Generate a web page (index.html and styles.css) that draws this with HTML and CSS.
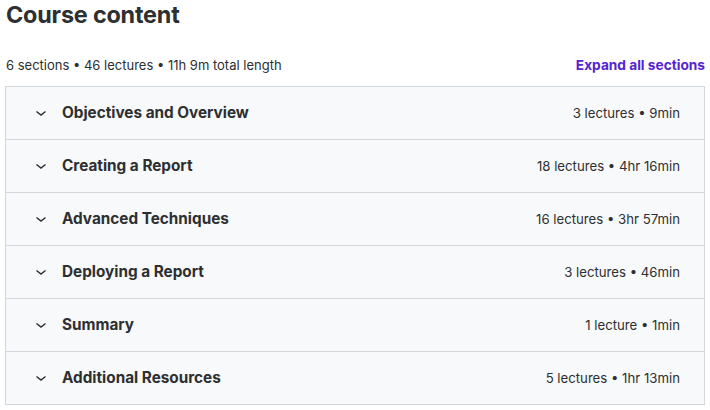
FILE: index.html
```html
<!DOCTYPE html>
<html lang="en">
<head>
    <meta charset="UTF-8">
    <meta name="viewport" content="width=device-width, initial-scale=1.0">
    <title>Course content</title>
    <link rel="stylesheet" href="styles.css">
</head>
<body>
    <div class="curriculum">
        <h2 class="curriculum-title">Course content</h2>

        <!-- SUMMARY BAR -->
        <div class="curriculum-summary">
            <span class="summary-text">6 sections • 46 lectures • 11h 9m total length</span>
            <a href="#" class="expand-btn">Expand all sections</a>
        </div>

        <!-- SECTIONS -->
        <div class="section-list">
            <div class="section-row">
                <svg class="chevron" viewBox="0 0 12 8"><path d="M1.5 2.5L6 6l4.5-3.5"/></svg>
                <span class="section-title">Objectives and Overview</span>
                <span class="section-meta">3 lectures • 9min</span>
            </div>
            <div class="section-row">
                <svg class="chevron" viewBox="0 0 12 8"><path d="M1.5 2.5L6 6l4.5-3.5"/></svg>
                <span class="section-title">Creating a Report</span>
                <span class="section-meta">18 lectures • 4hr 16min</span>
            </div>
            <div class="section-row">
                <svg class="chevron" viewBox="0 0 12 8"><path d="M1.5 2.5L6 6l4.5-3.5"/></svg>
                <span class="section-title">Advanced Techniques</span>
                <span class="section-meta">16 lectures • 3hr 57min</span>
            </div>
            <div class="section-row">
                <svg class="chevron" viewBox="0 0 12 8"><path d="M1.5 2.5L6 6l4.5-3.5"/></svg>
                <span class="section-title">Deploying a Report</span>
                <span class="section-meta">3 lectures • 46min</span>
            </div>
            <div class="section-row">
                <svg class="chevron" viewBox="0 0 12 8"><path d="M1.5 2.5L6 6l4.5-3.5"/></svg>
                <span class="section-title">Summary</span>
                <span class="section-meta">1 lecture • 1min</span>
            </div>
            <div class="section-row">
                <svg class="chevron" viewBox="0 0 12 8"><path d="M1.5 2.5L6 6l4.5-3.5"/></svg>
                <span class="section-title">Additional Resources</span>
                <span class="section-meta">5 lectures • 1hr 13min</span>
            </div>
        </div>
    </div>
</body>
</html>
```

FILE: styles.css
```css
body {
    margin: 0;
    background: white;
    font-family: Inter, "Noto Sans", sans-serif;
    color: #2d2f31;
}

.curriculum {
    width: 700px;
    margin-left: 5px;
}

.curriculum-title {
    margin: 0;
    padding: 1px 0 0 1px;
    font-size: 23.4px;
    font-weight: 700;
    line-height: 28px;
    letter-spacing: -0.2px;
}

.curriculum-summary {
    display: flex;
    align-items: center;
    justify-content: space-between;
    margin-top: 26px;
    margin-bottom: 11px;
    padding-left: 1px;
    line-height: 20px;
}

.summary-text {
    font-size: 13px;
}

.expand-btn {
    color: #5624d0;
    font-size: 13.7px;
    font-weight: 700;
    text-decoration: none;
}

/* Section list */
.section-list {
    border: 1px solid #d1d7dc;
}

.section-row {
    display: flex;
    align-items: center;
    height: 52px;
    padding: 0 24px 0 29px;
    background: #f7f9fa;
    border-bottom: 1px solid #d1d7dc;
}

.section-row:last-child {
    border-bottom: none;
}

.chevron {
    width: 12px;
    height: 8px;
    fill: none;
    stroke: #2d2f31;
    stroke-width: 1.5;
    margin-right: 15px;
}

.section-title {
    flex: 1;
    font-size: 15.3px;
    font-weight: 700;
    line-height: 20px;
    padding-bottom: 1px;
}

.section-meta {
    font-size: 13.2px;
    line-height: 20px;
    padding-bottom: 1px;
}
```
